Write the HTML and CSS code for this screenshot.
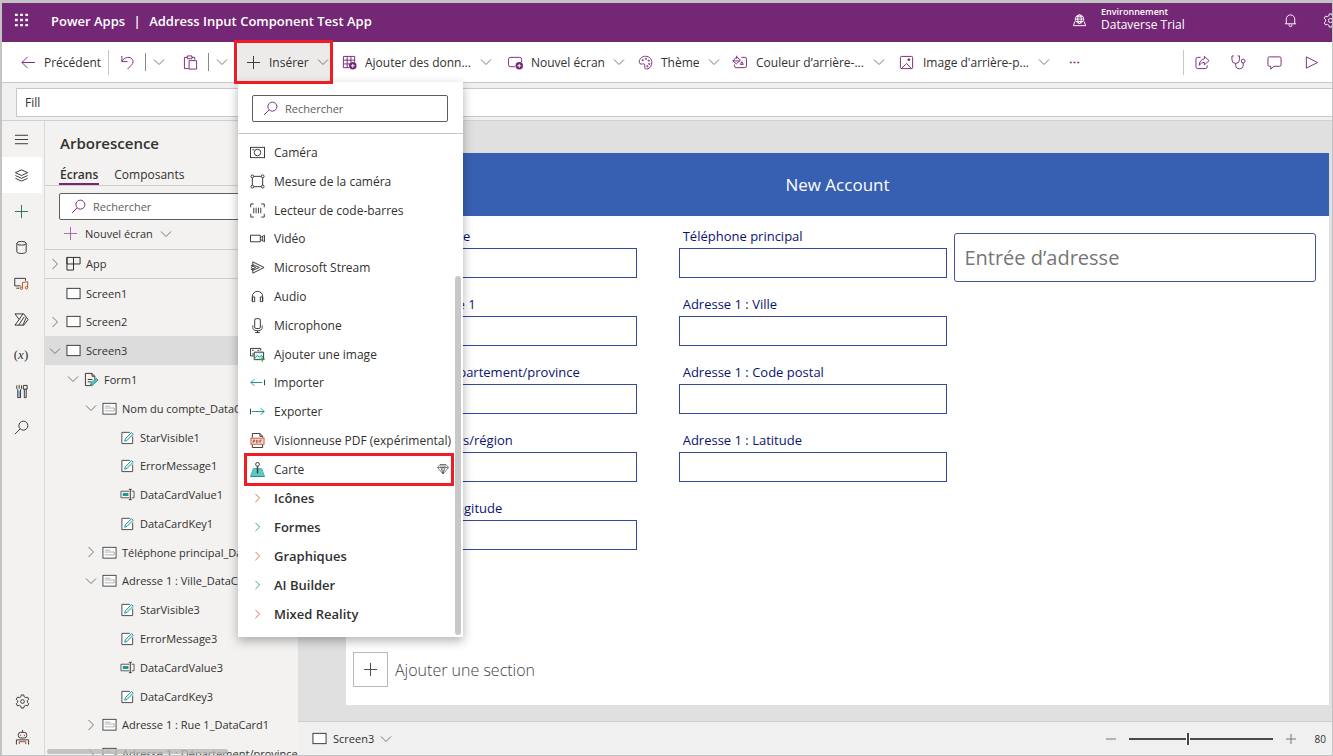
FILE: index.html
```html
<!DOCTYPE html>
<html lang="fr">
<head>
<meta charset="utf-8">
<title>Power Apps | Address Input Component Test App</title>
<link rel="stylesheet" href="styles.css">
</head>
<body>
<svg class="sprite" aria-hidden="true">
  <symbol id="down" viewBox="0 0 12 12"><path d="M1 3.5l5 5 5-5"/></symbol>
  <symbol id="right" viewBox="0 0 12 12"><path d="M3.5 1l5 5-5 5"/></symbol>
  <symbol id="plus" viewBox="0 0 16 16"><path d="M8 1v14M1 8h14"/></symbol>
  <symbol id="search" viewBox="0 0 16 16"><circle cx="10" cy="6" r="4.8"/><path d="M6.5 9.5L1 15"/></symbol>
  <symbol id="screen" viewBox="0 0 16 16"><rect x="1" y="2.500" width="14" height="11" fill="#fff" stroke="#333"/></symbol>
  <symbol id="card" viewBox="0 0 16 16"><rect x="1" y="2.500" width="14" height="11.500" stroke="#444" fill="#fff"/><path d="M3 5.500h6M3 7.500h10v3H3" stroke="#aaa"/></symbol>
  <symbol id="label" viewBox="0 0 16 16"><path d="M13.500 7v7.500h-11.500V2.500h8.500" fill="#fff" stroke="#444"/><path d="M5 12l.8-2.800L12.300 2.700l1.800 1.800-6.500 6.500z" fill="#d8f3f1" stroke="#16918d"/></symbol>
  <symbol id="textbox" viewBox="0 0 16 16"><path d="M10 4.500H1v7h9M12.500 4.500H15v7h-2.500" stroke="#555"/><rect x="3" y="6.500" width="6" height="3" fill="#16918d" stroke="none"/><path d="M9.500 2.500h3M11 2.500v11M9.500 13.500h3" stroke="#333"/></symbol>
</svg>

<div class="app">
  <header class="topbar">
    <button class="waffle" aria-label="Lanceur d'applications"><svg class="ic" viewBox="0 0 16 16"><path d="M1 2h3M6.500 2h3M12 2h3M1 7.500h3M6.500 7.500h3M12 7.500h3M1 13h3M6.500 13h3M12 13h3" stroke-width="2.500"/></svg></button>
    <span class="product">Power Apps</span><span class="bar">|</span><span class="appname">Address Input Component Test App</span>
    <div class="env">
      <svg class="ic" viewBox="0 0 16 16"><circle cx="8" cy="6.500" r="4.500"/><ellipse cx="8" cy="6.500" rx="2" ry="4.500"/><path d="M3.500 6.500h9M4.500 4h7M4.500 9h7M3 9l-1.500 4.500h13L13 9"/></svg>
      <div class="envtext"><small>Environnement</small><span>Dataverse Trial</span></div>
    </div>
    <button class="topbtn" aria-label="Notifications"><svg class="ic" viewBox="0 0 16 16"><path d="M3.500 11.500V6.500a4.500 4.500 0 0 1 9 0v5M2 11.500h12M6.500 12v1a1.500 1.500 0 0 0 3 0v-1"/></svg></button>
    <button class="topbtn gear" aria-label="Paramètres"><svg class="ic" viewBox="0 0 16 16"><path d="M6.700 1h2.600l.5 2 1.500.9 2-.6 1.400 2.300L13.200 7v2l1.500 1.400-1.400 2.300-2-.6-1.500.9-.5 2H6.700l-.5-2-1.500-.9-2 .6-1.400-2.300L2.800 9V7L1.300 5.600l1.400-2.300 2 .6L6.200 3z"/><circle cx="8" cy="8" r="2.200"/></svg></button>
  </header>

  <nav class="commands" aria-label="Commandes">
    <button class="cmd back"><svg class="ic" viewBox="0 0 16 16"><path d="M15 8H1M7 2L1 8l6 6"/></svg><span>Précédent</span></button>
    <i class="sep"></i>
    <button class="cmd split" aria-label="Annuler"><svg class="ic" viewBox="0 0 16 16"><path d="M2 1v6h6M2 6.500C5 2.500 9 1.500 12 3.500c3 2.500 2 5.500 0 7.500l-4 4"/></svg></button>
    <i class="sep dark"></i>
    <button class="cmd drop" aria-label="Plus"><svg class="chev"><use href="#down"/></svg></button>
    <button class="cmd split" aria-label="Coller"><svg class="ic" viewBox="0 0 16 16"><path d="M6 14.500H1.500V2.500h3M9.500 2.500h3V5M4.500 1h5v3h-5zM6.500 6h8v9h-8z"/></svg></button>
    <i class="sep dark"></i>
    <button class="cmd drop" aria-label="Options de collage"><svg class="chev"><use href="#down"/></svg></button>
    <div class="insert">
      <button class="cmd insertbtn marked" aria-expanded="true"><svg class="ic ink"><use href="#plus"/></svg><span>Insérer</span><svg class="chev"><use href="#down"/></svg></button>
      <div class="menu">
        <div class="menuhead"><label class="search"><svg class="ic"><use href="#search"/></svg><input type="text" placeholder="Rechercher" aria-label="Rechercher un composant"></label></div>
        <div class="items">
          <button><svg class="ic" viewBox="0 0 16 16"><rect x=".5" y="2.500" width="15" height="11"/><circle cx="8" cy="8" r="3.500"/><path d="M2.500 5h2"/></svg>Caméra</button>
          <button><svg class="ic" viewBox="0 0 16 16"><path d="M4 2.500h8M4 13.500h8M2.500 4v8M13.500 4v8"/><circle cx="2.500" cy="2.500" r="1.500"/><circle cx="13.500" cy="2.500" r="1.500"/><circle cx="2.500" cy="13.500" r="1.500"/><circle cx="13.500" cy="13.500" r="1.500"/></svg>Mesure de la caméra</button>
          <button><svg class="ic" viewBox="0 0 16 16"><path d="M4 1H.8v3.500M12 1h3.200v3.500M4 15H.8v-3.500M12 15h3.200v-3.500M4 5v6M6.500 5v6M9 5v6M11.500 5v6"/></svg>Lecteur de code-barres</button>
          <button><svg class="ic" viewBox="0 0 16 16"><path d="M.5 4.500h10.500v7H.5zM11 7l4.500-2.500v7L11 9M13.500 6v4"/></svg>Vidéo</button>
          <button><svg class="ic" viewBox="0 0 16 16"><path d="M3 2l12 6-12 6V9.500L1 8l2-1.500zM3 5l7 3-7 3M1 5.500L6 8l-5 2.500"/></svg>Microsoft Stream</button>
          <button><svg class="ic" viewBox="0 0 16 16"><path d="M2.500 13V8a5.500 5.500 0 0 1 11 0v5M2.500 8.500h2.500v5H2.500zM11 8.500h2.500v5H11z"/></svg>Audio</button>
          <button><svg class="ic" viewBox="0 0 16 16"><rect x="5" y=".7" width="6" height="10.500" rx="1.500"/><path d="M3 8v2c0 2 1.500 3.500 3.500 3.500h3c2 0 3.500-1.500 3.500-3.500V8M8 13.500v2M5.500 15.500h5"/></svg>Microphone</button>
          <button><svg class="ic" viewBox="0 0 16 16"><path d="M4 9.500H.5v-8h11V4M2 3.500h2M8 3.500h2M2 7.500h2"/><path d="M4.500 5.500h10v8h-10z" fill="#d9f5f3"/><path d="M5 12l3-3 2 2 2-2 2 2" stroke="#16918d"/><path d="M13 10v6M10 13h6" stroke="#2aa04a"/></svg>Ajouter une image</button>
          <button><svg class="ic teal" viewBox="0 0 16 16"><path d="M13 8H1M4.500 4.500L1 8l3.500 3.500"/><path d="M15.500 5v6" stroke="#333"/></svg>Importer</button>
          <button><svg class="ic teal" viewBox="0 0 16 16"><path d="M2 8h13M11.500 4.500L15 8l-3.500 3.500"/><path d="M.5 5v6" stroke="#333"/></svg>Exporter</button>
          <button><svg class="ic" viewBox="0 0 16 16"><path d="M2.500 5V.5h8l3 3V5M2.500 12v3.500h11V12M10.500.5v3h3"/><rect x="1" y="5.500" width="14" height="6.500" fill="#fbd9cf" stroke="#d9532c"/><path d="M3.500 10.500v-3h1.500v1.500H3.500M7 7.500v3c2.300 0 2.300-3 0-3zM12.500 7.500h-2v3M10.500 9h1.500" stroke="#7a4a3c" stroke-width=".8"/></svg>Visionneuse PDF (expérimental)</button>
          <button class="marked"><svg class="ic" viewBox="0 0 16 16"><path d="M3.500 7h9l3 8.500H.5z" fill="#5cc8c3" stroke="#4ab5b0"/><path d="M.5 15.500h15" stroke="#16918d"/><path d="M8 4.500V12" stroke="#333" stroke-width="1.500"/><circle cx="8" cy="2.500" r="2" fill="#fff"/></svg>Carte<svg class="gem" viewBox="0 0 12 12"><path d="M3 1.500h6L11.500 4.500 6 11 .5 4.500zM.5 4.500h11M4 1.500v3L6 11l2-6.500v-3M6 1.500V11"/></svg></button>
          <button class="group"><svg class="ic orange"><use href="#right"/></svg>Icônes</button>
          <button class="group"><svg class="ic teal"><use href="#right"/></svg>Formes</button>
          <button class="group"><svg class="ic orange"><use href="#right"/></svg>Graphiques</button>
          <button class="group"><svg class="ic teal"><use href="#right"/></svg>AI Builder</button>
          <button class="group"><svg class="ic orange"><use href="#right"/></svg>Mixed Reality</button>
        </div>
        <i class="scroll"></i>
      </div>
    </div>
    <button class="cmd data"><svg class="ic" viewBox="0 0 16 16"><path d="M7.500 13.500h-6v-12h12V8M1.500 5.500h12M1.500 9.500h7M5.500 1.500v12M9.500 1.500V8"/><circle cx="11.500" cy="11.500" r="4" fill="#742774" stroke="none"/><path d="M11.500 9.500v4M9.500 11.500h4" stroke="#fff"/></svg><span>Ajouter des donn...</span><svg class="chev"><use href="#down"/></svg></button>
    <button class="cmd newscreen"><svg class="ic" viewBox="0 0 16 16"><path d="M7.500 12.500h-5a2 2 0 0 1-2-2v-6a2 2 0 0 1 2-2h10a2 2 0 0 1 2 2V8"/><circle cx="12" cy="11.500" r="4" fill="#742774" stroke="none"/><path d="M12 9.500v4M10 11.500h4" stroke="#fff"/></svg><span>Nouvel écran</span><svg class="chev"><use href="#down"/></svg></button>
    <button class="cmd theme"><svg class="ic" viewBox="0 0 16 16"><path d="M1.500 6C2.500 2.500 6 .8 9.500 1.500c4 .8 6 4.500 5 8.500-.7 3-3 5-5.500 5-2 0-2-1.500-1.700-3.200C7.500 10 6.500 9 5 9.500c-2.500.8-4.300-.5-3.500-3.500z"/><circle cx="5" cy="5.500" r=".7"/><circle cx="8.500" cy="4" r=".7"/><circle cx="11.500" cy="6" r=".7"/><circle cx="12" cy="9.500" r=".7"/><circle cx="10" cy="12" r=".7"/></svg><span>Thème</span><svg class="chev"><use href="#down"/></svg></button>
    <button class="cmd fillcolor"><svg class="ic" viewBox="0 0 16 16"><path d="M10 2.500h3.500a2 2 0 0 1 2 2v7a2 2 0 0 1-2 2h-9a2 2 0 0 1-2-2V10M5 2L.8 6.300 4.500 9.500 9 5.500zM5 4V.8M1 6.300h7M10.500 7l-1.500 3h3z"/></svg><span>Couleur d’arrière-...</span><svg class="chev"><use href="#down"/></svg></button>
    <button class="cmd fillimage"><svg class="ic" viewBox="0 0 16 16"><rect x="1.500" y="1.500" width="13" height="13" rx="1"/><path d="M2.500 14.500L8 9l5.500 5.500"/><circle cx="10.500" cy="5" r="1" fill="#742774"/></svg><span>Image d'arrière-p...</span><svg class="chev"><use href="#down"/></svg></button>
    <button class="cmd more" aria-label="Autres commandes"><svg class="ic" viewBox="0 0 16 16"><path d="M3 8h2M7 8h2M11 8h2" stroke-width="1.500"/></svg></button>
    <div class="actions">
      <button class="act" aria-label="Partager"><svg class="ic" viewBox="0 0 16 16"><path d="M6 2.500H3a2 2 0 0 0-2 2v8a2 2 0 0 0 2 2h8a2 2 0 0 0 2-2V11M10 1.500L15 6l-5 4.500V8C7.500 8 6 8.800 4.500 11c0-3.500 2-6.500 5.500-7z"/></svg></button>
      <button class="act" aria-label="Vérificateur"><svg class="ic" viewBox="0 0 16 16"><path d="M3 1H1v4a4 4 0 0 0 8 0V1H7M5 9v2c0 5 8 5 8 0V8.500"/><circle cx="13" cy="6.500" r="2"/></svg></button>
      <button class="act" aria-label="Commentaires"><svg class="ic" viewBox="0 0 16 16"><path d="M2.500 2h11a1.500 1.500 0 0 1 1.500 1.500v7a1.500 1.500 0 0 1-1.500 1.500H7.500L4 15v-3H2.500A1.500 1.500 0 0 1 1 10.500v-7A1.500 1.500 0 0 1 2.500 2z"/></svg></button>
      <button class="act" aria-label="Aperçu"><svg class="ic" viewBox="0 0 16 16"><path d="M2.500 2l12 6-12 6z"/></svg></button>
    </div>
  </nav>

  <div class="formula">
    <input class="prop" type="text" value="Fill" aria-label="Propriété">
    <input class="expr" type="text" aria-label="Formule">
  </div>

  <div class="work">
    <nav class="rail" aria-label="Volets">
      <button aria-label="Menu"><svg class="ic" viewBox="0 0 16 16"><path d="M1 3.500h14M1 8h14M1 12.500h14"/></svg></button>
      <button class="on" aria-label="Arborescence"><svg class="ic" viewBox="0 0 16 16"><path d="M8 2l6.500 3L8 8 1.500 5zM1.500 8L8 11l6.500-3M1.500 11L8 14l6.500-3"/></svg></button>
      <button class="add" aria-label="Insérer"><svg class="ic"><use href="#plus"/></svg></button>
      <button aria-label="Données"><svg class="ic" viewBox="0 0 16 16"><ellipse cx="8" cy="3.500" rx="5" ry="2"/><path d="M3 3.500v9c0 2.500 10 2.500 10 0v-9"/></svg></button>
      <button aria-label="Média"><svg class="ic" viewBox="0 0 16 16"><path d="M7 10.500H.8v-8h11.500V5M2.500 13h3"/><path d="M9 13V7l5.500-1v6" stroke="#b8501e"/><circle cx="7.800" cy="13" r="1.300" stroke="#b8501e"/><circle cx="13.300" cy="12.500" r="1.300" stroke="#b8501e"/></svg></button>
      <button aria-label="Power Automate"><svg class="ic" viewBox="0 0 16 16"><path d="M1 2h9.500L15 8l-4.500 6H1L5.500 8zM5.500 8L9.500 2M5 14l6-9M9.500 14L13 6"/></svg></button>
      <button class="var" aria-label="Variables">(<i>x</i>)</button>
      <button aria-label="Outils avancés"><svg class="ic" viewBox="0 0 16 16"><path d="M3 1.500V5l1 1v8.500h3V6l1-1V1.500M5.500 1v4M10 1.500h4M10 1.500v4h4v-4M11 5.500v9h2v-9"/><path d="M5.500 7v7" stroke="#2b7cd3"/></svg></button>
      <button aria-label="Rechercher"><svg class="ic"><use href="#search"/></svg></button>
      <button class="low" aria-label="Paramètres"><svg class="ic" viewBox="0 0 16 16"><path d="M6.700 1h2.600l.5 2 1.500.9 2-.6 1.400 2.300L13.200 7v2l1.500 1.400-1.400 2.300-2-.6-1.500.9-.5 2H6.700l-.5-2-1.500-.9-2 .6-1.400-2.300L2.800 9V7L1.300 5.600l1.400-2.300 2 .6L6.200 3z"/><circle cx="8" cy="8" r="2"/></svg></button>
      <button class="bot" aria-label="Agent virtuel"><svg class="ic" viewBox="0 0 16 16"><path d="M8 0v2"/><rect x="3.500" y="2.500" width="9" height="6" rx="2.500"/><path d="M6 5v1.500M10 5v1.500" stroke="#d03020"/><path d="M1.500 15.500v-5h13v5"/><path d="M4.500 15v-2.500h7V15" stroke="#a3401c"/></svg></button>
    </nav>

    <aside class="tree">
      <h2>Arborescence</h2>
      <div class="tabs"><button class="active">Écrans</button><button>Composants</button></div>
      <label class="search"><svg class="ic"><use href="#search"/></svg><input type="text" placeholder="Rechercher" aria-label="Rechercher dans l'arborescence"></label>
      <button class="new"><svg class="ic"><use href="#plus"/></svg>Nouvel écran<svg class="chev"><use href="#down"/></svg></button>
      <div class="clip">
        <ul class="nodes">
          <li class="app-node"><svg class="chev"><use href="#right"/></svg><svg class="ic" viewBox="0 0 16 16"><path d="M1 1.500h14v7H1zM8 1.500v13.500H1v-13.500" stroke="#222"/></svg>App</li>
          <li><span class="chev"></span><svg class="ic"><use href="#screen"/></svg>Screen1</li>
          <li><svg class="chev"><use href="#right"/></svg><svg class="ic"><use href="#screen"/></svg>Screen2</li>
          <li class="sel"><svg class="chev"><use href="#down"/></svg><svg class="ic"><use href="#screen"/></svg>Screen3</li>
          <li class="l1"><svg class="chev"><use href="#down"/></svg><svg class="ic" viewBox="0 0 16 16"><path d="M9 14.500H1.500v-13H8.500l3 3V8M8.500 1.500v3h3M4 8h5M4 10.500h4" fill="none"/><path d="M6.500 14.500l1-2.500 5.500-5 2 1.500-5.500 5z" fill="#5cc8c3" stroke="#16918d"/></svg>Form1</li>
          <li class="l2"><svg class="chev"><use href="#down"/></svg><svg class="ic"><use href="#card"/></svg>Nom du compte_DataCard1</li>
          <li class="l3"><svg class="ic"><use href="#label"/></svg>StarVisible1</li>
          <li class="l3"><svg class="ic"><use href="#label"/></svg>ErrorMessage1</li>
          <li class="l3"><svg class="ic"><use href="#textbox"/></svg>DataCardValue1</li>
          <li class="l3"><svg class="ic"><use href="#label"/></svg>DataCardKey1</li>
          <li class="l2"><svg class="chev"><use href="#right"/></svg><svg class="ic"><use href="#card"/></svg>Téléphone principal_DataCard1</li>
          <li class="l2"><svg class="chev"><use href="#down"/></svg><svg class="ic"><use href="#card"/></svg>Adresse 1 : Ville_DataCard1</li>
          <li class="l3"><svg class="ic"><use href="#label"/></svg>StarVisible3</li>
          <li class="l3"><svg class="ic"><use href="#label"/></svg>ErrorMessage3</li>
          <li class="l3"><svg class="ic"><use href="#textbox"/></svg>DataCardValue3</li>
          <li class="l3"><svg class="ic"><use href="#label"/></svg>DataCardKey3</li>
          <li class="l2"><svg class="chev"><use href="#right"/></svg><svg class="ic"><use href="#card"/></svg>Adresse 1 : Rue 1_DataCard1</li>
          <li class="l2"><svg class="chev"><use href="#right"/></svg><svg class="ic"><use href="#card"/></svg>Adresse 1 : Département/province_DataCard1</li>
        </ul>
        <i class="hscroll"></i>
      </div>
    </aside>

    <main class="stage">
      <div class="canvas">
        <section class="screen">
          <h1>New Account</h1>
          <div class="body">
            <form class="form">
              <label>Nom du compte<input type="text"></label>
              <label>Téléphone principal<input type="text"></label>
              <label>Adresse 1 : Rue 1<input type="text"></label>
              <label>Adresse 1 : Ville<input type="text"></label>
              <label>Adresse 1 : Département/province<input type="text"></label>
              <label>Adresse 1 : Code postal<input type="text"></label>
              <label>Adresse 1 : Pays/région<input type="text"></label>
              <label>Adresse 1 : Latitude<input type="text"></label>
              <label>Adresse 1 : Longitude<input type="text"></label>
            </form>
            <input class="address" type="text" placeholder="Entrée d’adresse" aria-label="Entrée d’adresse">
          </div>
          <button class="addsection"><span class="box"><svg class="ic"><use href="#plus"/></svg></span>Ajouter une section</button>
        </section>
      </div>
      <footer class="status">
        <button class="current"><svg class="ic"><use href="#screen"/></svg>Screen3<svg class="chev"><use href="#down"/></svg></button>
        <div class="zoom">
          <button aria-label="Zoom arrière"><svg class="chev" viewBox="0 0 12 12"><path d="M1 6h10"/></svg></button>
          <input type="range" min="0" max="100" value="41" aria-label="Zoom">
          <button aria-label="Zoom avant"><svg class="chev" viewBox="0 0 12 12"><path d="M6 1v10M1 6h10"/></svg></button>
          <span class="pct">80</span>
        </div>
      </footer>
    </main>
  </div>
</div>
</body>
</html>
```
FILE: styles.css
```css
* { box-sizing: border-box; }
body { margin: 0; font-family: "Open Sans", "Noto Sans", sans-serif; font-size: 12px; color: #323130; }
button { font: inherit; color: inherit; background: none; border: 0; padding: 0; }
input { font: inherit; color: inherit; border-radius: 0; }
svg { fill: none; stroke: currentColor; flex: none; }
.sprite { position: absolute; width: 0; height: 0; }
.ic { width: 15px; height: 15px; flex: none; }
.chev { width: 12px; height: 12px; flex: none; color: #797775; }
.ink { color: #323130; }
.teal { color: #16918d; }
.orange { color: #c4532e; }

.app { display: flex; flex-direction: column; height: 100vh; border: 2px solid #c3c3c3; border-top-width: 3px; border-bottom-width: 1px; border-right-width: 1px; overflow: hidden; background: #f3f2f1; }

/* Top bar */
.topbar { display: flex; align-items: center; height: 39px; flex: none; overflow: hidden; background: #742774; color: #fff; font-size: 13px; font-weight: 600; padding: 0 0 4px 12px; }
.waffle { display: flex; width: 37px; }
.bar { width: 24px; text-align: center; }
.env { display: flex; align-items: center; gap: 14px; margin-left: auto; width: 211px; font-weight: 400; }
.envtext { display: flex; flex-direction: column; line-height: 13px; font-size: 12px; margin-top: -4px; }
.envtext small { font-size: 9px; font-weight: 600; line-height: 12px; }
.topbtn { display: flex; width: 40px; flex: none; }
.gear { width: 9px; }

/* Commands */
.commands { display: flex; align-items: center; height: 41px; flex: none; background: #fff; border-bottom: 1px solid #c8c8c8; }
.cmd { display: flex; align-items: center; height: 40px; gap: 9px; flex: none; color: #742774; white-space: nowrap; }
.cmd span { flex: 1; text-align: left; color: #323130; }
.sep { width: 1px; height: 25px; background: #c8c6c4; }
.sep.dark { height: 18px; background: #8a8886; }
.back { width: 106px; padding-left: 19px; }
.back, .data, .newscreen, .theme { gap: 8px; }
.split { width: 36px; padding-left: 11px; }
.drop { width: 26px; padding-left: 7px; }
.insert { position: relative; margin: 0 8px 0 3px; }
.insertbtn { width: 94px; padding: 0 5px 0 8px; gap: 8px; background: #edebe9; }
.marked { position: relative; }
.marked::after { content: ""; position: absolute; border: 3px solid #ee1c25; z-index: 3; }
.insertbtn.marked::after { inset: -2px -1px -2px -4px; }
.data { width: 166px; padding: 0 14px 0 2px; }
.newscreen { width: 131px; padding: 0 18px 0 2px; }
.theme { width: 94px; padding: 0 14px 0 1px; }
.fillcolor { width: 167px; padding: 0 14px 0 1px; }
.fillimage { width: 162px; padding: 0 10px 0 1px; }
.more { width: 28px; justify-content: center; }
.actions { display: flex; align-items: center; height: 25px; margin-left: auto; padding-left: 11px; border-left: 1px solid #c8c6c4; }
.act { width: 36px; display: flex; color: #742774; }
.act:last-child { width: 29px; padding-left: 1px; }

/* Insert menu */
.menu { position: absolute; top: 40px; left: 0; width: 225px; height: 555px; display: flex; flex-direction: column; background: #fff; z-index: 2; box-shadow: 0 4px 10px rgba(0, 0, 0, .3); }
.menuhead { padding: 13px 15px 11px 14px; border-bottom: 1px solid #c8c8c8; }
.search { display: flex; align-items: center; gap: 7px; height: 27px; padding-left: 11px; background: #fff; border: 1px solid #605e5c; border-radius: 2px; color: #742774; }
.menuhead .search { padding-left: 10px; }
.search input { flex: 1; min-width: 0; border: 0; background: none; padding: 0; font-size: 11px; }
.search input::placeholder { color: #605e5c; opacity: 1; }
.items { flex: 1; display: grid; grid-auto-rows: 1fr; padding: 4px 9px 9px 6px; }
.items button { display: flex; align-items: center; gap: 9px; padding-left: 6px; text-align: left; white-space: nowrap; }
.items .marked::after { inset: -2px 0; }
.items .group { font-size: 13px; font-weight: 600; }
.group .ic { height: 10px; }
.gem { width: 12px; height: 12px; margin-left: auto; margin-right: 5px; color: #605e5c; stroke-width: .8; }
.scroll { position: absolute; right: 2px; bottom: 2px; width: 6px; height: 359px; border-radius: 3px; background: #c8c8c8; }

/* Formula bar */
.formula { display: flex; height: 38px; flex: none; padding: 5px 0 3px 14px; border-bottom: 1px solid #d0d0d0; background: #f0f0f0; }
.formula input { border: 1px solid #c8c8c8; background: #fff; padding: 0 8px; min-width: 0; }
.prop { width: 230px; }
.expr { flex: 1; }
.formula .expr { border-right: 0; }

.work { display: flex; flex: 1; min-height: 0; }

/* Rail */
.rail { display: flex; flex-direction: column; width: 43px; flex: none; border-right: 1px solid #dcdad8; }
.rail button { display: flex; align-items: center; justify-content: center; height: 36px; width: 40px; padding-right: 2px; flex: none; }
.rail .on { background: #fff; }
.rail .add { color: #217346; }
.rail .low { margin-top: auto; padding-right: 0; }
.rail .bot { padding-right: 0; }
.var { font-family: "Liberation Serif", serif; font-size: 13px; }

/* Tree */
.tree { display: flex; flex-direction: column; width: 253px; flex: none; font-size: 11px; }
.tree h2 { margin: 0; padding: 11px 15px 10px; font-size: 15px; line-height: 22px; font-weight: 600; }
.tabs { display: flex; gap: 14px; padding-left: 14px; border-bottom: 1px solid #d0cecc; font-size: 12px; }
.tabs button { height: 21px; padding: 0 1px; }
.tabs .active { font-weight: 600; box-shadow: inset 0 -2px #742774; }
.tree .search { margin: 7px 9px 0 14px; }
.new { display: flex; align-items: center; gap: 7px; height: 29px; padding: 0 0 2px 18px; }
.new .ic { color: #a067a0; }
.clip { position: relative; flex: 1; min-height: 0; overflow: hidden; border-top: 1px solid #d0cecc; }
.nodes { list-style: none; margin: 0; padding: 0; display: grid; grid-auto-rows: 1fr; height: 518px; }
.nodes li { display: flex; align-items: center; gap: 5px; padding-left: 4px; white-space: nowrap; overflow: hidden; }
.nodes .app-node { border-bottom: 1px solid #d0cecc; }
.nodes .sel { background: #dcdcdc; }
.nodes .l1 { padding-left: 22px; }
.nodes .l2 { padding-left: 40px; }
.nodes .l3 { padding-left: 75px; }
.hscroll { position: absolute; left: 2px; bottom: 1px; width: 181px; height: 5px; border-radius: 3px; background: #b8b8b8; opacity: .8; }

/* Canvas */
.stage { flex: 1; min-width: 0; display: flex; flex-direction: column; background: #e0e0e0; }
.canvas { flex: 1; min-height: 0; display: flex; padding: 32px 3px 16px 48px; }
.screen { flex: 1; display: flex; flex-direction: column; background: #fff; }
.screen h1 { margin: 0; height: 63px; line-height: 63px; background: #3860b2; color: #fff; text-align: center; font-size: 17px; font-weight: 400; }
.body { display: grid; grid-template-columns: 580fr 362fr; column-gap: 7px; padding: 12px 13px 0 22px; align-items: start; }
.form { display: grid; grid-template-columns: 1fr 1fr; column-gap: 42px; row-gap: 18px; color: #0a1470; font-size: 13px; }
.form label { display: flex; flex-direction: column; height: 50px; min-width: 0; line-height: 17px; text-indent: 4px; white-space: nowrap; }
.form input { width: 100%; height: 31px; margin-top: 3px; border: 1px solid #34479a; background: #fff; }
.address { width: 100%; min-width: 0; height: 49px; margin-top: 5px; padding: 0 9px; border: 1px solid #46549c; border-radius: 3px; font-size: 20px; background: #fff; }
.address::placeholder { color: #767676; opacity: 1; }
.addsection { display: flex; align-items: center; gap: 7px; margin: auto 7px 18px; font-size: 16px; font-weight: 300; color: #444; }
.box { display: flex; align-items: center; justify-content: center; width: 35px; height: 35px; border: 1px solid #b8b8b8; }

/* Status bar */
.status { display: flex; align-items: center; justify-content: space-between; height: 34px; flex: none; padding: 0 6px 0 14px; background: #f0f0f0; border-top: 1px solid #cfcfcf; font-size: 11px; }
.current { display: flex; align-items: center; gap: 6px; }
.zoom { display: flex; align-items: center; }
.zoom button { display: flex; }
.zoom input { appearance: none; width: 144px; height: 14px; margin: 0 12px; background: linear-gradient(#4a4a4a, #4a4a4a) center / 100% 2px no-repeat; }
.zoom input::-webkit-slider-thumb { appearance: none; width: 4px; height: 12px; background: #444; border: 0 solid #fff; border-width: 0 1px; }
.pct { width: 29px; text-align: right; font-size: 10px; }
```
